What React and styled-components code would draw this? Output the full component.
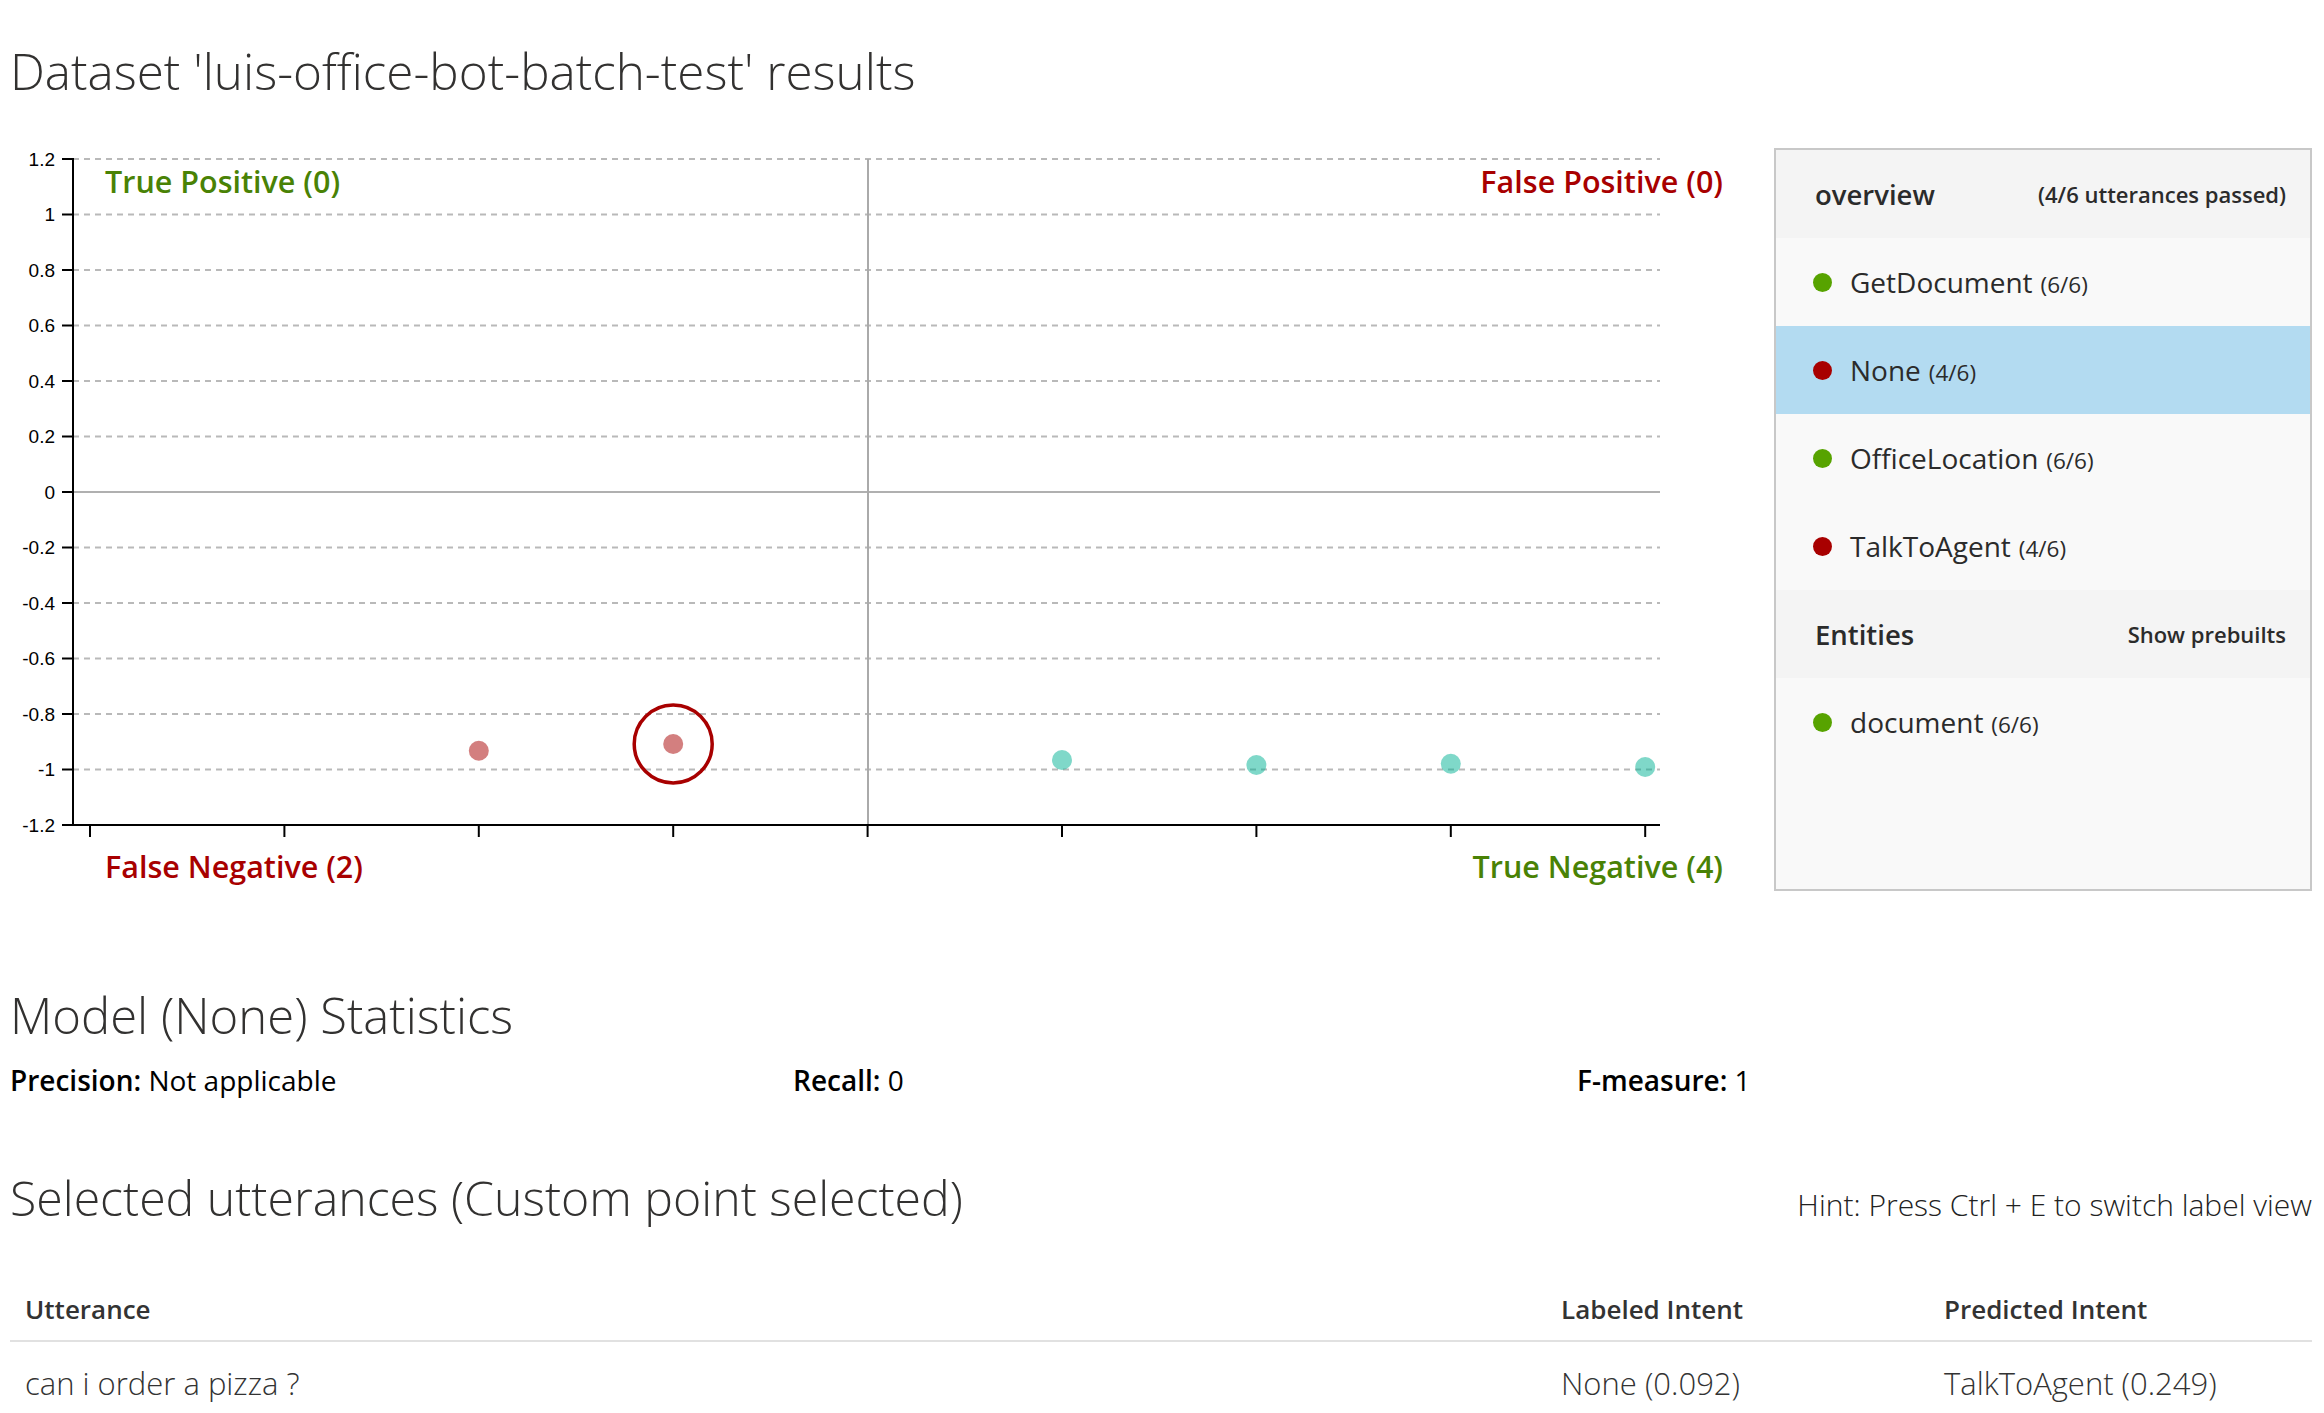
import React from 'react';
import styled, { createGlobalStyle } from 'styled-components';

const GlobalStyle = createGlobalStyle`
  html, body {
    margin: 0;
    padding: 0;
    background: #fff;
  }
  body {
    font-family: "Open Sans", "Noto Sans", sans-serif;
    color: #333;
  }
`;

const Page = styled.div`
  padding: 0 12px 0 10px;
`;

const Heading = styled.h1`
  margin: ${(p) => p.$top}px 0 0;
  font-size: ${(p) => p.$size || 49}px;
  font-weight: 300;
  line-height: 64px;
  color: #323130;
  white-space: nowrap;
`;

const ChartRow = styled.div`
  display: flex;
  justify-content: space-between;
  align-items: flex-start;
  margin-top: 37px;
`;

const ChartBox = styled.div`
  width: 1730px;
  height: 760px;
  flex: none;
`;

const Panel = styled.div`
  box-sizing: border-box;
  width: 538px;
  height: 743px;
  margin-top: 8px;
  border: 2px solid #c8c8c8;
  background: #f9f9f9;
  flex: none;
`;

const PanelHeader = styled.div`
  height: 88px;
  display: flex;
  align-items: center;
  justify-content: space-between;
  padding: 0 24px 0 39px;
  background: #f4f4f4;
  color: #2b2b2b;
`;

const PanelTitle = styled.span`
  font-size: 27.5px;
  font-weight: 600;
`;

const PanelNote = styled.span`
  font-size: 22px;
  font-weight: 600;
`;

const PanelItem = styled.div`
  height: 88px;
  display: flex;
  align-items: center;
  padding-left: 37px;
  background: ${(p) => (p.$active ? '#b3dbf1' : 'transparent')};
  color: #2b2b2b;
`;

const Dot = styled.span`
  width: 19px;
  height: 19px;
  border-radius: 50%;
  background: ${(p) => (p.$ok ? '#57a300' : '#a80000')};
  margin-right: 18px;
  flex: none;
`;

const ItemName = styled.span`
  font-size: 28px;
`;

const ItemCount = styled.span`
  font-size: 22.5px;
  margin-left: 8px;
  padding-top: 4px;
`;

const StatsRow = styled.div`
  display: grid;
  grid-template-columns: 783px 784px 1fr;
  margin-top: 14px;
  font-size: 28px;
  line-height: 38px;
  color: #000;
`;

const StatLabel = styled.b`
  font-weight: 600;
`;

const SelectedRow = styled.div`
  display: flex;
  justify-content: space-between;
  align-items: baseline;
  margin-top: 66px;
`;

const Hint = styled.span`
  font-size: 30px;
  font-weight: 300;
  color: #222;
`;

const Table = styled.table`
  width: 100%;
  margin-top: 49px;
  border-collapse: collapse;
  table-layout: fixed;
`;

const Th = styled.th`
  height: 62px;
  padding: 0 15px;
  text-align: left;
  font-size: 26px;
  font-weight: 600;
  color: #333;
  border-bottom: 2px solid #e1e1e1;
`;

const Td = styled.td`
  height: 82px;
  padding: 0 15px;
  font-size: 31px;
  font-weight: 300;
  color: #333;
`;

const GREEN = '#498205';
const RED = '#a80000';
const TEAL = '#00b294';

const TOP = 19;
const STEP = 55.5;
const LEFT = 63;
const RIGHT = 1650;
const BOTTOM = TOP + STEP * 12;
const yOf = (v) => TOP + ((1.2 - v) / 0.2) * STEP;
const xTick = (i) => 80 + i * 194.4;

const yTicks = ['1.2', '1', '0.8', '0.6', '0.4', '0.2', '0', '-0.2', '-0.4', '-0.6', '-0.8', '-1', '-1.2'];

const points = [
  { i: 2, y: 610.7, c: RED },
  { i: 3, y: 604, c: RED, selected: true },
  { i: 5, y: 620, c: TEAL },
  { i: 6, y: 625, c: TEAL },
  { i: 7, y: 623.7, c: TEAL },
  { i: 8, y: 627, c: TEAL },
];

const Chart = () => (
  <svg width="1730" height="760" viewBox="0 0 1730 760">
    {yTicks.map((t, k) => {
      const y = TOP + k * STEP;
      return (
        <g key={t}>
          {k < 12 && (
            <line x1={LEFT} x2={RIGHT} y1={y} y2={y} stroke="#b9b9b9" strokeWidth="2" strokeDasharray="6 5" />
          )}
          <line x1={LEFT - 11} x2={LEFT} y1={y} y2={y} stroke="#000" strokeWidth="2" />
          <text x={LEFT - 18} y={y} dy="0.35em" textAnchor="end" fontFamily="Liberation Sans, Arial, sans-serif" fontSize="19" fill="#000">
            {t}
          </text>
        </g>
      );
    })}
    <line x1={LEFT} x2={RIGHT} y1={yOf(0)} y2={yOf(0)} stroke="#b0b0b0" strokeWidth="2" />
    <line x1="858" x2="858" y1={TOP} y2={BOTTOM} stroke="#aaaaaa" strokeWidth="2" />
    <line x1={LEFT} x2={LEFT} y1={TOP - 1} y2={BOTTOM + 1} stroke="#000" strokeWidth="2" />
    <line x1={LEFT - 11} x2={RIGHT} y1={BOTTOM} y2={BOTTOM} stroke="#000" strokeWidth="2" />
    {Array.from({ length: 9 }, (_, i) => (
      <line key={i} x1={xTick(i)} x2={xTick(i)} y1={BOTTOM} y2={BOTTOM + 12} stroke="#000" strokeWidth="2" />
    ))}
    {points.map((p) => (
      <g key={p.i}>
        <circle cx={xTick(p.i)} cy={p.y} r="10" fill={p.c} opacity="0.5" />
        {p.selected && <circle cx={xTick(p.i)} cy={p.y} r="39" fill="none" stroke={RED} strokeWidth="3.5" />}
      </g>
    ))}
    <g fontFamily="Open Sans, Noto Sans, sans-serif" fontSize="30.5" fontWeight="600">
      <text x="95" y="53" fill={GREEN}>True Positive (0)</text>
      <text x="1713" y="53" fill={RED} textAnchor="end">False Positive (0)</text>
      <text x="95" y="738" fill={RED}>False Negative (2)</text>
      <text x="1713" y="738" fill={GREEN} textAnchor="end">True Negative (4)</text>
    </g>
  </svg>
);

const intents = [
  { name: 'GetDocument', count: '(6/6)', ok: true },
  { name: 'None', count: '(4/6)', ok: false, active: true },
  { name: 'OfficeLocation', count: '(6/6)', ok: true },
  { name: 'TalkToAgent', count: '(4/6)', ok: false },
];

const App = () => (
  <Page>
    <GlobalStyle />
    <Heading $top={39} $size={49.4}>Dataset 'luis-office-bot-batch-test' results</Heading>
    <ChartRow>
      <ChartBox>
        <Chart />
      </ChartBox>
      <Panel>
        <PanelHeader>
          <PanelTitle>overview</PanelTitle>
          <PanelNote>(4/6 utterances passed)</PanelNote>
        </PanelHeader>
        {intents.map((it) => (
          <PanelItem key={it.name} $active={it.active}>
            <Dot $ok={it.ok} />
            <ItemName>{it.name}</ItemName>
            <ItemCount>{it.count}</ItemCount>
          </PanelItem>
        ))}
        <PanelHeader>
          <PanelTitle>Entities</PanelTitle>
          <PanelNote>Show prebuilts</PanelNote>
        </PanelHeader>
        <PanelItem>
          <Dot $ok />
          <ItemName>document</ItemName>
          <ItemCount>(6/6)</ItemCount>
        </PanelItem>
      </Panel>
    </ChartRow>

    <Heading $top={83}>Model (None) Statistics</Heading>
    <StatsRow>
      <span><StatLabel>Precision:</StatLabel> Not applicable</span>
      <span><StatLabel>Recall:</StatLabel> 0</span>
      <span><StatLabel>F-measure:</StatLabel> 1</span>
    </StatsRow>

    <SelectedRow>
      <Heading $top={0} $size={48.2}>Selected utterances (Custom point selected)</Heading>
      <Hint>Hint: Press Ctrl + E to switch label view</Hint>
    </SelectedRow>

    <Table>
      <colgroup>
        <col style={{ width: 1536 }} />
        <col style={{ width: 383 }} />
        <col />
      </colgroup>
      <thead>
        <tr>
          <Th>Utterance</Th>
          <Th>Labeled Intent</Th>
          <Th>Predicted Intent</Th>
        </tr>
      </thead>
      <tbody>
        <tr>
          <Td>can i order a pizza ?</Td>
          <Td>None (0.092)</Td>
          <Td>TalkToAgent (0.249)</Td>
        </tr>
      </tbody>
    </Table>
  </Page>
);

export default App;
